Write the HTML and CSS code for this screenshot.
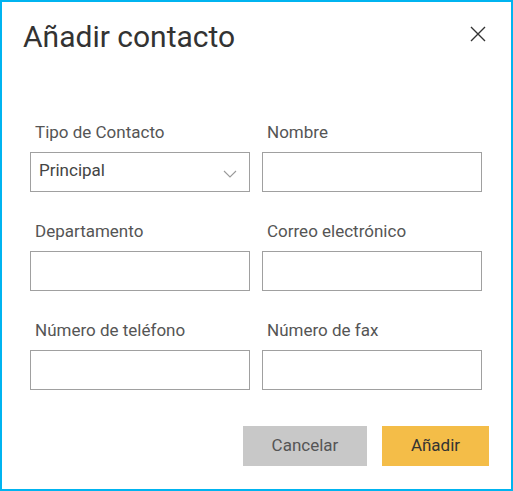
FILE: index.html
```html
<!DOCTYPE html>
<html lang="es">
<head>
<meta charset="utf-8">
<title>Añadir contacto</title>
<link rel="stylesheet" href="styles.css">
</head>
<body>
<div class="dialog">
  <header class="head">
    <h1 class="title">Añadir contacto</h1>
    <button class="close" type="button" aria-label="Cerrar">
      <svg width="16" height="16" viewBox="0 0 16 16"><path d="M1 1L15 15M15 1L1 15" stroke="#333" stroke-width="1.4" fill="none"/></svg>
    </button>
  </header>
  <form class="grid">
    <div class="field">
      <label class="label">Tipo de Contacto</label>
      <div class="select"><span class="select-value">Principal</span>
        <svg class="chev" width="14" height="8" viewBox="0 0 14 8"><path d="M1 1L7 7L13 1" stroke="#9a9a9a" stroke-width="1.1" fill="none"/></svg>
      </div>
    </div>
    <div class="field">
      <label class="label">Nombre</label>
      <input class="input" type="text">
    </div>
    <div class="field">
      <label class="label">Departamento</label>
      <input class="input" type="text">
    </div>
    <div class="field">
      <label class="label">Correo electrónico</label>
      <input class="input" type="text">
    </div>
    <div class="field">
      <label class="label">Número de teléfono</label>
      <input class="input" type="text">
    </div>
    <div class="field">
      <label class="label">Número de fax</label>
      <input class="input" type="text">
    </div>
  </form>
  <div class="actions">
    <button class="btn cancel" type="button">Cancelar</button>
    <button class="btn add" type="button">Añadir</button>
  </div>
</div>
</body>
</html>
```
FILE: styles.css
```css
* { box-sizing: border-box; }
html, body { margin: 0; padding: 0; background: #fff; }
body { font-family: Roboto, "Noto Sans", sans-serif; }
.dialog {
  width: 513px;
  height: 491px;
  border: 2px solid #00b4f0;
  background: #fff;
}
.head {
  display: flex;
  justify-content: space-between;
  align-items: flex-start;
  padding: 17px 25px 0 21px;
}
.title {
  margin: 0;
  font-size: 30px;
  line-height: 36px;
  font-weight: 400;
  color: #333;
}
.close {
  border: 0;
  background: none;
  padding: 0;
  margin-top: 7px;
  width: 16px;
  height: 16px;
  display: block;
}
.close svg { display: block; }
.grid {
  display: grid;
  grid-template-columns: 220px 220px;
  column-gap: 12px;
  row-gap: 29px;
  padding: 0 0 0 28px;
  margin: 67px 0 0 0;
}
.field { display: flex; flex-direction: column; gap: 10px; }
.label {
  font-size: 17px;
  line-height: 20px;
  color: #555;
  padding-left: 5px;
}
.input, .select {
  width: 220px;
  height: 40px;
  border: 1px solid #a0a0a0;
  background: #fff;
  margin: 0;
  font: inherit;
}
.select {
  display: flex;
  align-items: center;
  justify-content: space-between;
  padding: 0 12px 0 8px;
}
.select-value {
  font-size: 17px;
  line-height: 20px;
  color: #444;
  padding-bottom: 4px;
}
.chev { display: block; margin-top: 4px; }
.actions {
  display: flex;
  justify-content: flex-end;
  gap: 15px;
  padding-right: 22px;
  margin-top: 36px;
}
.btn {
  height: 40px;
  border: 0;
  font-family: inherit;
  font-size: 17px;
  padding: 0 0 3px 0;
}
.cancel { width: 124px; background: #c8c8c8; color: #555; }
.add { width: 107px; background: #f4bd48; color: #333; }
```
